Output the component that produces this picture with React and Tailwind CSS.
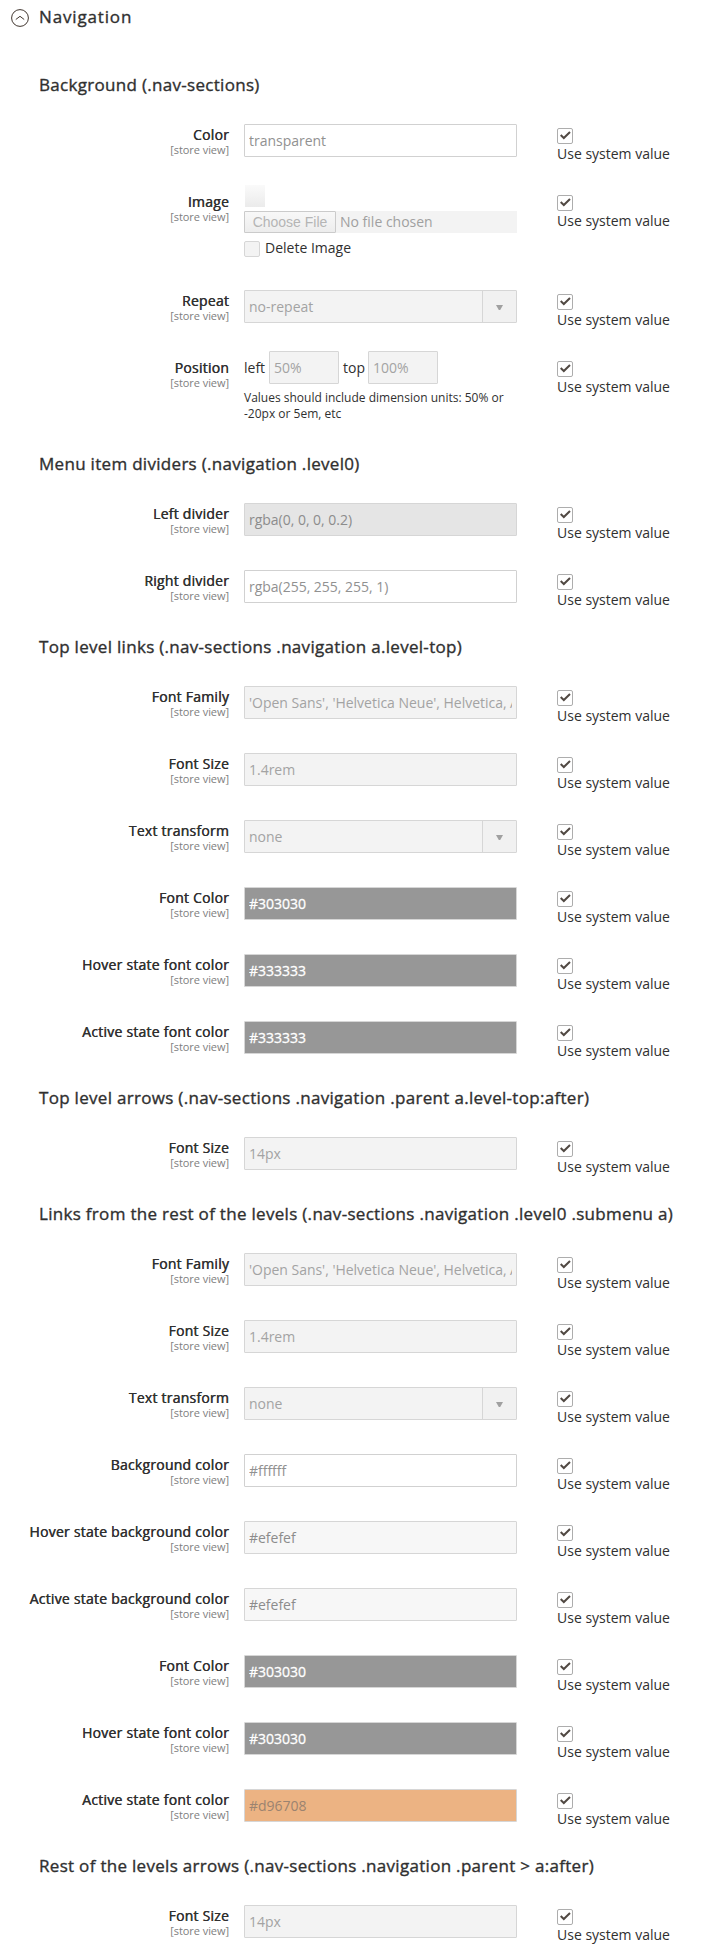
const boxes = {
  plain: 'border-[#d1d1d1] bg-white text-[#919191]',
  disabled: 'border-[#d6d6d6] bg-[#f3f3f3] text-[#a3a3a3]',
  shade: 'border-[#d6d6d6] bg-[#e5e5e5] text-[#8c8c8c]',
  pale: 'border-[#d6d6d6] bg-[#f7f7f7] text-[#8c8c8c]',
  dark: 'border-[#d6d6d6] bg-[#979797] text-white [-webkit-text-stroke:0.3px]',
  orange: 'border-[#d6d6d6] bg-[#ecb383] text-[#9b8370]',
};

const groups = [
  {
    title: 'Background (.nav-sections)',
    fields: [
      { label: 'Color', value: 'transparent', look: 'plain' },
      { label: 'Image', type: 'image' },
      { label: 'Repeat', value: 'no-repeat', type: 'select' },
      { label: 'Position', type: 'position' },
    ],
  },
  {
    title: 'Menu item dividers (.navigation .level0)',
    fields: [
      { label: 'Left divider', value: 'rgba(0, 0, 0, 0.2)', look: 'shade' },
      { label: 'Right divider', value: 'rgba(255, 255, 255, 1)', look: 'plain' },
    ],
  },
  {
    title: 'Top level links (.nav-sections .navigation a.level-top)',
    fields: [
      { label: 'Font Family', value: "'Open Sans', 'Helvetica Neue', Helvetica, A" },
      { label: 'Font Size', value: '1.4rem' },
      { label: 'Text transform', value: 'none', type: 'select' },
      { label: 'Font Color', value: '#303030', look: 'dark' },
      { label: 'Hover state font color', value: '#333333', look: 'dark' },
      { label: 'Active state font color', value: '#333333', look: 'dark' },
    ],
  },
  {
    title: 'Top level arrows (.nav-sections .navigation .parent a.level-top:after)',
    fields: [{ label: 'Font Size', value: '14px' }],
  },
  {
    title: 'Links from the rest of the levels (.nav-sections .navigation .level0 .submenu a)',
    fields: [
      { label: 'Font Family', value: "'Open Sans', 'Helvetica Neue', Helvetica, A" },
      { label: 'Font Size', value: '1.4rem' },
      { label: 'Text transform', value: 'none', type: 'select' },
      { label: 'Background color', value: '#ffffff', look: 'plain' },
      { label: 'Hover state background color', value: '#efefef', look: 'pale' },
      { label: 'Active state background color', value: '#efefef', look: 'pale' },
      { label: 'Font Color', value: '#303030', look: 'dark' },
      { label: 'Hover state font color', value: '#303030', look: 'dark' },
      { label: 'Active state font color', value: '#d96708', look: 'orange' },
    ],
  },
  {
    title: 'Rest of the levels arrows (.nav-sections .navigation .parent > a:after)',
    fields: [{ label: 'Font Size', value: '14px' }],
  },
];

function TextBox({ value, look = 'disabled', width = 'w-full' }) {
  return (
    <div className={`flex h-[33px] items-center rounded-[1px] border px-1 ${width} ${boxes[look]}`}>
      <span className="min-w-0 flex-1 overflow-hidden whitespace-nowrap leading-[21px] tracking-[-0.02px]">{value}</span>
    </div>
  );
}

function SelectBox({ value }) {
  return (
    <div className="flex h-[33px] rounded-[1px] border border-[#d6d6d6] bg-[#f3f3f3] text-[#a3a3a3]">
      <span className="flex-1 self-center pl-1 leading-[21px]">{value}</span>
      <span className="flex w-[34px] items-center justify-center border-l border-[#d6d6d6] bg-[#f1f1f1]">
        <svg width="7" height="5" viewBox="0 0 7 5" className="mt-[2px]">
          <path d="M0 0h7L4.2 5H2.8z" fill="#a0a0a0" />
        </svg>
      </span>
    </div>
  );
}

function ImageField() {
  return (
    <div className="-mt-[6px] flex flex-col">
      <div className="ml-px h-[22px] w-[20px] bg-linear-to-b from-[#fafafa] to-[#ebebeb]" />
      <div className="mt-1 flex h-[22px] items-center bg-[#f3f3f3] text-[#a0a0a0]">
        <span className="flex h-[22px] w-[92px] items-center justify-center rounded-[1px] border border-[#cbcbcb] bg-linear-to-b from-[#f8f8f8] to-[#ededed] font-['Liberation_Sans',Arial,sans-serif] text-[#b5b5b5]">
          Choose File
        </span>
        <span className="ml-1 leading-[22px]">No file chosen</span>
      </div>
      <div className="mt-2 flex h-4 items-center gap-[5px]">
        <span className="size-4 rounded-[2px] border border-[#d6d6d6] bg-[#f3f3f3]" />
        <span className="-mt-[2px] leading-[16px]">Delete Image</span>
      </div>
    </div>
  );
}

function PositionField() {
  return (
    <div className="-mt-[6px]">
      <div className="flex items-center">
        <span className="w-[25px]">left</span>
        <TextBox value="50%" width="w-[70px]" />
        <span className="ml-1 w-[25px]">top</span>
        <TextBox value="100%" width="w-[70px]" />
      </div>
      <p className="mt-[6px] text-xs leading-[16px]">
        Values should include dimension units: 50% or
        <br />
        -20px or 5em, etc
      </p>
    </div>
  );
}

function SystemValue() {
  return (
    <div className="ml-10 pt-1">
      <div className="flex size-4 items-center justify-center rounded-[2px] border border-[#adadad] bg-white">
        <svg width="14" height="14" viewBox="0 0 14 14">
          <path d="M2.7 6.1L5.8 9L12 3" fill="none" stroke="#514943" strokeWidth="2" />
        </svg>
      </div>
      <div className="leading-[20px]">Use system value</div>
    </div>
  );
}

const rowHeights = { image: 'h-[99px]', position: 'h-[97px]' };

function Field({ field }) {
  return (
    <div className={`flex items-start ${rowHeights[field.type] ?? 'h-[67px]'}`}>
      <div className="w-[229px] text-right">
        <div className="leading-[21px] tracking-[0.23px] [text-shadow:0.4px_0_0_#303030]">{field.label}</div>
        <div className="text-[11px] leading-[10px] tracking-[-0.06px] text-[#808080]">[store view]</div>
      </div>
      <div className="ml-[15px] w-[273px]">
        {field.type === 'image' && <ImageField />}
        {field.type === 'position' && <PositionField />}
        {field.type === 'select' && <SelectBox value={field.value} />}
        {!field.type && <TextBox value={field.value} look={field.look} />}
      </div>
      <SystemValue />
    </div>
  );
}

export default function App() {
  return (
    <div className="h-[1957px] w-[726px] overflow-hidden bg-white pt-[7px] font-['Open_Sans',sans-serif] text-sm text-[#303030]">
      <header className="flex h-[68px] items-start pl-[11px]">
        <svg width="18" height="18" viewBox="0 0 18 18" className="mt-[2px]" fill="none" stroke="#41362f">
          <circle cx="9" cy="9" r="8.4" strokeWidth="1" />
          <path d="M4.8 10.5L9 7.3l4.2 3.2" strokeWidth="1" />
        </svg>
        <h1 className="ml-[10px] text-[17px] leading-[19px] tracking-[0.85px] [-webkit-text-stroke:0.35px]">Navigation</h1>
      </header>
      {groups.map((group) => (
        <section key={group.title}>
          <h2 className="h-[49px] pl-[39px] text-[17px] leading-[19px] tracking-[0.3px] [-webkit-text-stroke:0.35px]">{group.title}</h2>
          {group.fields.map((field) => (
            <Field key={field.label} field={field} />
          ))}
        </section>
      ))}
    </div>
  );
}
